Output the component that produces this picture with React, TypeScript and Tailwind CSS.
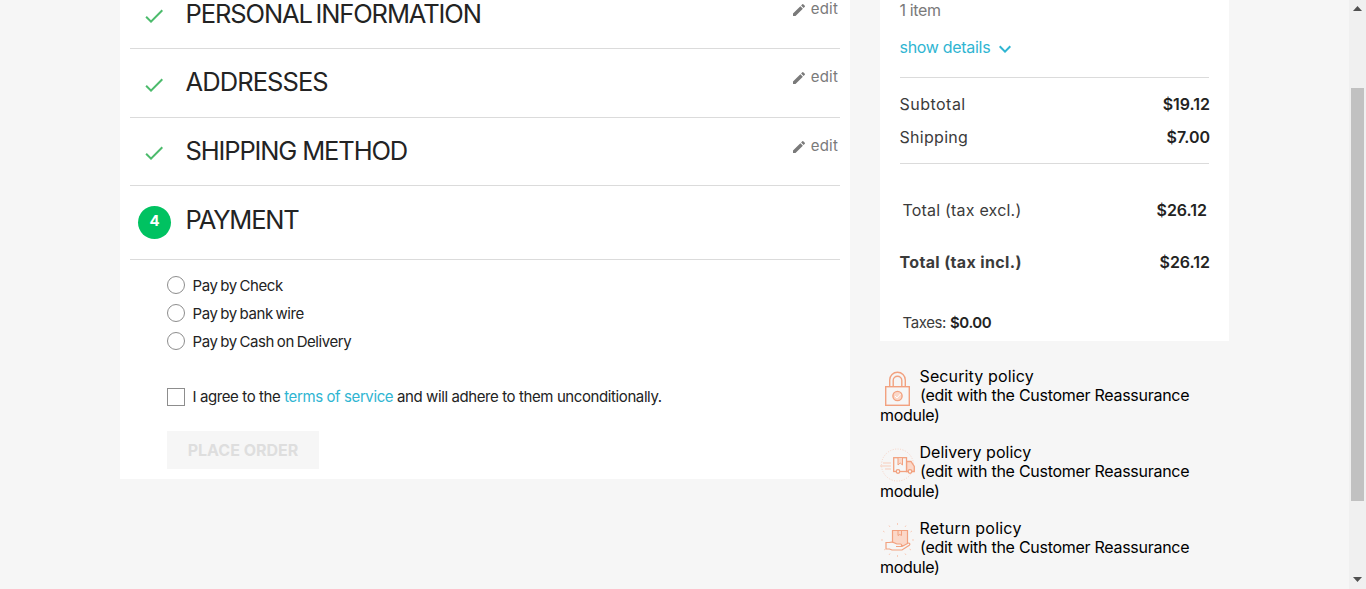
import type { ReactNode } from "react";
import { MdCheck, MdEdit, MdExpandMore } from "react-icons/md";

function DoneStep({ title, className, titleClassName, editClassName }: { title: string; className: string; titleClassName: string; editClassName: string }) {
  return (
    <section className={`flex items-start border-b border-[#dbdbdb] ${className}`}>
      <MdCheck className="mt-[3px] ml-3 size-6 shrink-0 text-[#4cbb6c]" />
      <h1 className={`ml-[19.5px] flex-1 text-[25.5px] leading-6 text-[#232323] ${titleClassName}`}>{title}</h1>
      <button className={`mr-[2px] flex h-6 items-center text-[15px] tracking-[0.2px] text-[#7a7a7a] ${editClassName}`}>
        <MdEdit className="mt-[2px] mr-[4px] size-4" />
        edit
      </button>
    </section>
  );
}

function PaymentOption({ label }: { label: string }) {
  return (
    <label className="flex h-7 items-center gap-[7.5px] text-[15px] tracking-[-0.42px] text-[#232323] [word-spacing:-1px]">
      <span className="size-[18px] rounded-full border border-[#8d8d8d] bg-white" />
      <span className="pt-[2px]">{label}</span>
    </label>
  );
}

function SummaryRow({ label, value, className, labelClassName }: { label: string; value: string; className: string; labelClassName: string }) {
  return (
    <div className={`flex h-6 items-center justify-between ${className}`}>
      <span className={labelClassName}>{label}</span>
      <b className="font-semibold text-[#232323]">{value}</b>
    </div>
  );
}

function LockIcon() {
  return (
    <svg viewBox="0 0 35 38" className="h-[38px] w-[35px]" fill="none" stroke="#f2a17f" strokeWidth="1.4">
      <rect x="5.7" y="16.7" width="23.6" height="18.6" />
      <path d="M9.7 16V10a7.8 7.8 0 0 1 15.6 0v6M13.2 16v-5.5a4.3 4.3 0 0 1 8.6 0V16" />
      <circle cx="17.5" cy="26" r="4.6" fill="#fbd8c9" />
      <path d="m15 26 2 2 3.5-4" stroke="#fff" strokeWidth="1" />
    </svg>
  );
}

function TruckIcon() {
  return (
    <svg viewBox="0 0 35 38" className="h-[38px] w-[35px]" fill="none" stroke="#f2a17f" strokeWidth="1.3">
      <circle cx="17.5" cy="19" r="16" stroke="#f8d3c5" strokeDasharray="1 1.5" strokeWidth="1" />
      <path d="M3 17h8M0 20h11M5 23h6" stroke="#f8cdbb" strokeWidth="1" />
      <path d="M26.5 15.5h4.5l3.3 5v5h-7.8z" fill="#fbd8c9" />
      <rect x="13.7" y="11.7" width="12.8" height="13.8" fill="#f6f6f6" />
      <path d="M18 12v7l2.2-2 2.3 2v-7" fill="#fbd8c9" strokeWidth="1" />
      <circle cx="18" cy="25.5" r="1.8" fill="#f6f6f6" />
      <circle cx="30" cy="25.5" r="1.8" fill="#f6f6f6" />
    </svg>
  );
}

function ParcelHandIcon() {
  return (
    <svg viewBox="0 0 35 38" className="h-[38px] w-[35px]" fill="none" stroke="#f2a17f" strokeWidth="1.2">
      <path d="M12.5 8.5h15v15h-15z" fill="#fbd8c9" />
      <path d="M18 8.5v5l1.8-1 1.7 1v-5" strokeWidth="1" />
      <path d="M6 20.500h3.500c3-1.500 5 .5 7.500 1.500h3.500c1.500 0 1.500 2.500 0 2.500H16h6l6-3.300c1.500-.7 2.500 1 1.300 2L22 28H12l-2.500-1H6z" fill="#f6f6f6" />
      <path d="M17.500 1v2M9 3.500l1 1.500M26 3.500 25 5M3 9l1.500 1M32 9l-1.500 1M1 18h2M32 18h2M4 28l1.500-1M31 28l-1.500-1M9 33l1-1.500M26 33l-1-1.500M17.500 33v2" stroke="#f8cdbb" strokeWidth="1" />
    </svg>
  );
}

function Policy({ title, titleClassName, icon }: { title: string; titleClassName: string; icon: ReactNode }) {
  return (
    <li className="h-[76px] text-[16px] leading-[19.5px] text-black">
      <div className="float-left mr-[4.5px] h-[39px] w-[35px] pt-[3.5px]">{icon}</div>
      <span className={titleClassName}>{title}</span>
      <br />
      <span className="ml-[0.5px] tracking-[-0.28px]">(edit with the Customer Reassurance</span>
      <br />
      <span className="tracking-[-0.3px]">module)</span>
    </li>
  );
}

export default function App() {
  return (
    <div className="flex h-[589px] overflow-hidden bg-[#f6f6f6] font-['Inter',sans-serif]">
      <div className="flex flex-1 items-start pl-[120px]">
        <main className="h-[479px] w-[730px] bg-white px-[10px]">
          <DoneStep title="PERSONAL INFORMATION" className="h-[49px] pt-px" titleClassName="pt-px tracking-[-1.1px] [word-spacing:-2.5px]" editClassName="-mt-1" />
          <DoneStep title="ADDRESSES" className="h-[69px] pt-[21px]" titleClassName="tracking-[-0.92px]" editClassName="-mt-[5px]" />
          <DoneStep title="SHIPPING METHOD" className="h-[68px] pt-[20px]" titleClassName="pt-px tracking-[-1.14px]" editClassName="-mt-1" />
          <section className="flex h-[74px] items-start border-b border-[#dbdbdb] pt-[20px]">
            <span className="ml-2 flex size-[33px] items-center justify-center rounded-full bg-[#00c261] pb-[2px] text-[15px] font-bold text-white">4</span>
            <h1 className="ml-[14.5px] text-[25.5px] leading-7 tracking-[-1.2px] text-[#232323]">PAYMENT</h1>
          </section>
          <div className="pt-[11px] pl-[37px]">
            <PaymentOption label="Pay by Check" />
            <PaymentOption label="Pay by bank wire" />
            <PaymentOption label="Pay by Cash on Delivery" />
            <label className="mt-[33px] flex h-[18px] items-center gap-[7.5px] text-[15px] tracking-[-0.4px] text-[#232323]">
              <span className="size-[18px] border border-[#8d8d8d] bg-white" />
              <span>I agree to the <a className="text-[#2fb5d2]">terms of service</a> and will adhere to them unconditionally.</span>
            </label>
            <button className="mt-[25px] flex h-[38px] w-[152px] items-center justify-center bg-[#f6f6f6] text-[16px] font-bold text-[#dedede]">PLACE ORDER</button>
          </div>
        </main>
        <aside className="ml-[30px] w-[349px]">
          <div className="h-[341px] bg-white pr-[19px] pl-[19.5px] text-[16px] text-[#3b3b3b]">
            <div className="h-[20px] leading-[20px] tracking-[-0.35px] text-[#7a7a7a]">1 item</div>
            <div className="mt-[15px] flex h-6 items-center tracking-[-0.3px] text-[#2fb5d2]">show details<MdExpandMore className="mt-[3px] ml-[2.5px] size-6" /></div>
            <div className="mt-[18px] mr-px ml-[0.5px] border-t border-[#dbdbdb]" />
            <SummaryRow label="Subtotal" value="$19.12" className="mt-[14px]" labelClassName="tracking-[0.48px]" />
            <SummaryRow label="Shipping" value="$7.00" className="mt-[9px]" labelClassName="tracking-[0.3px]" />
            <div className="mt-[14px] mr-px ml-[0.5px] border-t border-[#dbdbdb]" />
            <SummaryRow label="Total (tax excl.)" value="$26.12" className="mt-[34px] px-[3px]" labelClassName="tracking-[0.2px]" />
            <SummaryRow label="Total (tax incl.)" value="$26.12" className="mt-7" labelClassName="font-bold tracking-[0.35px]" />
            <div className="mt-[37px] flex h-6 items-center gap-[4px] pl-[3px] text-[15px] tracking-[-0.4px]"><span>Taxes:</span><b className="font-semibold text-[#232323]">$0.00</b></div>
          </div>
          <ul className="mt-[25.5px]">
            <Policy title="Security policy" titleClassName="tracking-[0.13px]" icon={<LockIcon />} />
            <Policy title="Delivery policy" titleClassName="tracking-[0.02px]" icon={<TruckIcon />} />
            <Policy title="Return policy" titleClassName="tracking-[0.22px]" icon={<ParcelHandIcon />} />
          </ul>
        </aside>
      </div>
      <div className="flex w-[17px] flex-col items-center bg-[#f0f0f0]">
        <svg className="mt-[6px] h-[5px] w-[9px]" viewBox="0 0 9 5" fill="#505050"><path d="M4.500 0 9 5H0z" /></svg>
        <div className="mt-[77px] h-[413px] w-[13px] bg-[#c1c1c1]" />
        <svg className="mt-[76px] h-[5px] w-[9px]" viewBox="0 0 9 5" fill="#505050"><path d="M4.500 5 9 0H0z" /></svg>
      </div>
    </div>
  );
}
